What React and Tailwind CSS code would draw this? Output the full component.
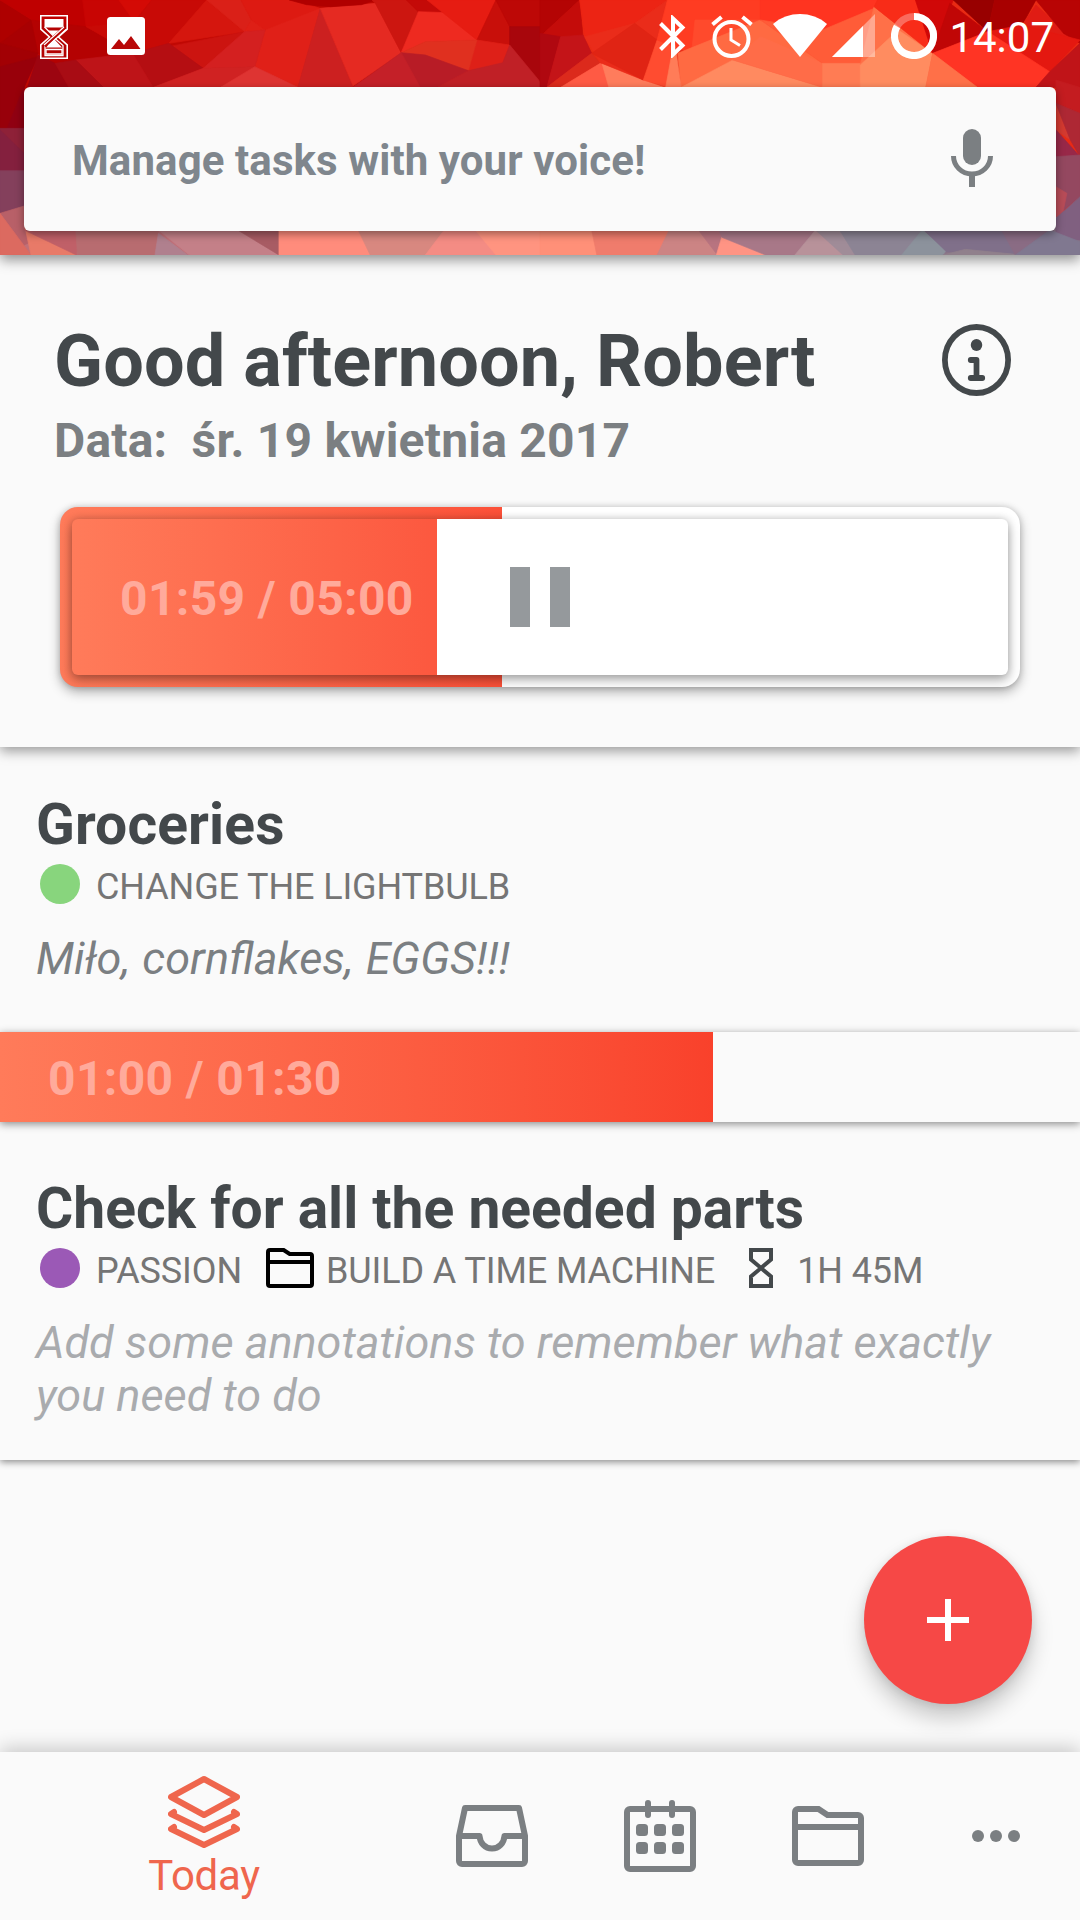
import React from "react";

// low poly artwork behind the search bar, [fill, points]
const polysLeft = [
  ["#ae0000", "0,0 90,60 0,130"],
  ["#bf0000", "0,0 240,0 250,80 110,70"],
  ["#b40202", "90,60 250,80 385,160 160,190 110,160"],
  ["#a80002", "0,130 90,60 110,160"],
  ["#a20004", "0,130 110,160 70,260 0,260"],
  ["#98000a", "0,200 110,170 70,262 20,385 0,385"],
  ["#9c0510", "80,262 110,165 160,190 200,262"],
  ["#900012", "20,385 70,260 70,385"],
  ["#8e2138", "0,385 70,385 70,512 0,512"],
  ["#84203e", "0,390 70,460 70,512 0,512"],
  ["#84405c", "0,512 70,512 70,620 0,640"],
  ["#b86068", "0,640 70,618 140,700 60,740"],
  ["#dc6a60", "0,640 90,765 0,765"],
  ["#c80503", "240,0 345,0 390,65 250,80"],
  ["#d40a05", "345,0 440,0 390,65"],
  ["#c80a06", "440,0 600,0 490,130 385,160 250,80 390,65"],
  ["#d5160e", "490,130 600,0 710,95"],
  ["#cc1410", "490,140 710,95 590,205"],
  ["#b50e12", "490,130 590,205 445,262 385,160"],
  ["#be1418", "385,160 445,262 300,262 220,180"],
  ["#a80c14", "160,190 220,180 300,262 200,262"],
  ["#da2018", "600,0 700,0 730,60 710,95"],
  ["#dd1a12", "700,0 850,0 930,25 770,90 730,60"],
  ["#de1f16", "710,95 730,60 770,90"],
  ["#e02018", "770,90 930,25 865,262 740,200"],
  ["#d42020", "740,200 590,205 710,95 770,90"],
  ["#d02222", "590,205 740,200 640,262 445,262"],
  ["#de3432", "740,200 865,262 640,262"],
  ["#cc2020", "930,25 1025,262 865,262"],
  ["#e52a22", "930,25 1090,10 1165,158 1025,258"],
  ["#b00000", "840,0 1090,0 1050,14 960,20 890,14"],
  ["#cc1610", "1090,10 1080,0 1180,0 1215,35 1165,158"],
  ["#c40a08", "1180,0 1240,0 1345,40 1215,35"],
  ["#ee2a20", "1215,35 1345,40 1385,120 1235,125 1165,158"],
  ["#e61c12", "1240,0 1440,0 1385,120"],
  ["#c80f0a", "1385,120 1440,0 1480,80 1480,135"],
  ["#bd0806", "1440,0 1568,0 1568,80 1480,80"],
  ["#de2018", "1385,120 1480,135 1460,190 1360,212"],
  ["#e0301f", "1165,158 1235,125 1385,120 1360,212"],
  ["#a8060c", "1480,80 1568,80 1568,250 1480,135"],
  ["#b81c26", "1165,158 1235,165 1360,212 1270,262 1215,262"],
  ["#c42028", "1165,158 1220,262 1025,262"],
  ["#c02026", "1270,262 1360,212 1460,188 1480,135 1568,245 1568,262"],
  ["#e87a68", "70,670 220,765 90,765"],
  ["#c06068", "70,690 230,690 222,765"],
  ["#b86c70", "220,690 460,690 450,765 225,765"],
  ["#b0808e", "460,700 545,765 450,765"],
  ["#c48088", "460,690 700,690 810,765 550,765"],
  ["#a85c64", "690,690 810,690 810,765"],
  ["#ff8c7c", "810,690 1050,690 1080,765 810,765"],
  ["#d88880", "1040,690 1290,690 1240,765 1075,765"],
  ["#f48c84", "1290,690 1400,690 1440,765 1235,765"],
  ["#ff9480", "1380,690 1568,690 1568,765 1440,765"],
];

const polysRight = [
  ["#b40404", "0,0 115,0 0,110"],
  ["#c40c0a", "115,0 125,110 0,110"],
  ["#ec2414", "115,0 370,0 275,70 130,110"],
  ["#b00810", "0,100 60,110 20,262 0,262"],
  ["#c41418", "60,110 125,105 150,160 20,262"],
  ["#dc2a1c", "150,160 175,190 60,262 20,262"],
  ["#ff5a44", "175,190 300,240 205,262 60,262"],
  ["#ff7c5c", "180,190 300,240 360,262 200,262"],
  ["#ea2c1a", "275,70 370,0 340,120 300,240 175,188 130,110"],
  ["#e02414", "275,70 340,120 300,240 150,160"],
  ["#ff4c30", "340,120 390,120 370,262 300,240"],
  ["#ff3c22", "340,120 370,0 640,0 640,110 440,160"],
  ["#ff4a2c", "450,60 640,60 640,110 440,160"],
  ["#ff6a42", "640,60 820,190 560,180 410,262 400,160"],
  ["#ff7c58", "390,120 410,262 365,262"],
  ["#ff8a60", "410,262 560,180 820,262"],
  ["#ff6c48", "560,180 640,110 820,190 820,262"],
  ["#ff3420", "640,0 980,0 970,25 820,90 640,60"],
  ["#ff5c38", "640,60 820,90 970,25 940,190 820,190"],
  ["#ff7c54", "820,190 940,190 930,262 820,262"],
  ["#ff7048", "970,20 1140,160 930,195"],
  ["#ff8c60", "930,195 1040,90 1140,160 1120,262 930,262"],
  ["#f82c18", "970,20 980,0 1150,0 1150,150 1140,160"],
  ["#d00808", "1090,0 1200,0 1140,160"],
  ["#c00606", "1190,10 1300,95 1140,160"],
  ["#980000", "1200,0 1320,0 1300,95"],
  ["#a80000", "1320,0 1440,0 1400,75 1300,95"],
  ["#e01c14", "1440,15 1400,75 1480,110 1540,110"],
  ["#b80404", "1440,0 1568,0 1568,130 1520,100"],
  ["#e41810", "1300,95 1400,75 1568,120 1480,215"],
  ["#ff3424", "1140,160 1300,95 1480,215 1450,262 1270,262"],
  ["#ff7048", "1140,160 1270,262 1120,262"],
  ["#c01418", "1480,215 1568,130 1568,262 1440,262"],
  ["#c41c20", "1498,240 1568,262 1568,340 1498,310"],
  ["#d43a30", "1498,310 1540,420 1498,390"],
  ["#ae2834", "1498,310 1568,340 1568,470 1540,420"],
  ["#982848", "1490,380 1568,470 1490,480"],
  ["#944860", "1498,470 1568,465 1568,590 1498,650"],
  ["#b84c58", "1498,560 1530,580 1515,655 1498,650"],
  ["#806080", "1498,655 1568,590 1568,720 1498,720"],
  ["#ff9078", "0,690 160,690 200,765 0,765"],
  ["#f07c6c", "150,690 385,690 340,765 165,765"],
  ["#cc8484", "375,690 530,690 510,765 340,765"],
  ["#b87480", "460,690 530,690 515,765"],
  ["#ff9484", "528,710 660,765 512,765"],
  ["#a87888", "520,690 800,690 740,765 655,765 528,712"],
  ["#b8929a", "800,690 890,765 740,765"],
  ["#a08c98", "800,690 870,690 920,765 880,765"],
  ["#8c8494", "870,690 1120,690 1050,765 915,765"],
  ["#8c929c", "1110,690 1180,750 1170,765 1050,765"],
  ["#80708a", "1115,690 1420,690 1380,765 1180,755"],
  ["#90808c", "1170,765 1235,748 1400,765"],
  ["#8a6c84", "1340,690 1490,690 1380,765"],
  ["#807890", "1480,690 1568,725 1568,765 1380,765"],
];

const Backdrop = () => (
  <svg
    className="absolute inset-0 h-full w-full"
    viewBox="0 0 3136 765"
    preserveAspectRatio="none"
  >
    <rect width="1568" height="765" fill="#c00803" />
    <rect x="1568" width="1568" height="765" fill="#e82a14" />
    <rect y="640" width="1568" height="125" fill="#c07078" />
    <rect x="1568" y="640" width="1568" height="125" fill="#8a7488" />
    {polysLeft.map(([fill, points]) => (
      <polygon key={fill + points} points={points} fill={fill} stroke={fill} strokeWidth="2" />
    ))}
    <g transform="translate(1568 0)">
      {polysRight.map(([fill, points]) => (
        <polygon key={fill + points} points={points} fill={fill} stroke={fill} strokeWidth="2" />
      ))}
    </g>
  </svg>
);

const StatusBar = () => (
  <div className="relative flex h-[87px] items-start pt-[13px] pl-10 pr-[25px] text-white">
    <svg className="mt-[2px] h-11 w-7" viewBox="0 0 28 44" fill="none">
      <path
        d="M.8.8h26.4v13.4L18.5 22l8.7 7.800v13.400H.8V29.800L9.500 22 .8 14.200z"
        stroke="#fff"
        strokeWidth="1.6"
      />
      <path d="M4.500 4h19v8.500h-19z" fill="#fff" />
      <path d="M4.500 12L14 21.500 23.500 12" stroke="#fff" strokeWidth="1.300" />
      <path d="M8 15.500h12L14 21z" fill="#fff" />
      <path d="M14 22.500l9 8V40.500H5V30.500z" stroke="#fff" strokeWidth="1.300" />
      <path d="M14 24l8 8.500H6z" fill="#fff" />
      <path d="M24 13L4.500 31" stroke="#b80504" strokeWidth="3.500" />
      <path d="M24 12L4 30M26 14.500L8 31" stroke="#fff" strokeWidth="1.200" />
      <path d="M6 34.500h16v4.500H6z" stroke="#fff" strokeWidth="1.300" />
    </svg>
    <svg className="mt-1 ml-[39px] h-[38px] w-[38px]" viewBox="0 0 38 38">
      <rect width="38" height="38" rx="3.500" fill="#fff" />
      <path d="M4 32l8-10 5 6 7-9 9.500 13z" fill="#b80808" />
    </svg>
    <div className="ml-auto flex items-start">
      <svg className="mt-[2px] h-[43px] w-[27px]" viewBox="0 0 27 43" fill="none">
        <path
          d="M1.500 8.500L23.500 30.500 14 39.500V3.500L23.500 12.500 1.500 34.500"
          stroke="#fff"
          strokeWidth="4"
        />
      </svg>
      <svg className="mt-[2px] ml-[25px] h-[43px] w-[42px]" viewBox="0 0 42 43" fill="none" stroke="#fff">
        <circle cx="20.500" cy="24" r="17" strokeWidth="4" />
        <path d="M20 13v12l9 5.500" strokeWidth="3" />
        <path d="M1.500 9.500l9-7.500M40.500 9.500l-9-7.500" strokeWidth="4" />
      </svg>
      <svg className="mt-[1px] ml-5 h-[43px] w-[54px]" viewBox="0 0 54 43">
        <path d="M0 10C15-3.300 39-3.300 54 10L27 43z" fill="#fff" />
      </svg>
      <svg className="mt-[1px] ml-[5px] h-[43px] w-[43px]" viewBox="0 0 43 43" fill="#fff">
        <path d="M0 43L43 0v43z" opacity=".4" />
        <path d="M0 43L31 12v31z" />
      </svg>
      <svg className="ml-4 h-[46px] w-[46px]" viewBox="0 0 46 46" fill="none" strokeWidth="7">
        <circle cx="23" cy="23" r="19.500" stroke="#fff" opacity=".3" />
        <path d="M23 3.500A19.500 19.500 0 1 1 6 13.500" stroke="#fff" />
      </svg>
      <span className="ml-3 pt-[1px] pr-[1px] text-[42px] leading-[48px]">14:07</span>
    </div>
  </div>
);

const SearchBar = () => (
  <div className="relative mx-6 flex h-36 items-center justify-between rounded-md bg-[#fafafa] pr-[63px] pl-12 shadow-[0_3px_8px_rgba(0,0,0,0.4)]">
    <span className="pt-1 text-[42px] leading-[50px] font-bold tracking-[0.09px] text-[#7f868d]">
      Manage tasks with your voice!
    </span>
    <svg className="mb-[2px] h-[58px] w-[42px]" viewBox="0 0 42 58" fill="none">
      <rect x="12" width="18" height="36" rx="9" fill="#7b7f82" />
      <path d="M2.500 27a18.500 18 0 0 0 37 0" stroke="#7b7f82" strokeWidth="5" />
      <path d="M21 46v12" stroke="#7b7f82" strokeWidth="6" />
    </svg>
  </div>
);

const InfoIcon = () => (
  <svg className="h-[72px] w-[69px]" viewBox="0 0 72 72" preserveAspectRatio="none">
    <circle cx="36" cy="36" r="33" fill="none" stroke="#43484b" strokeWidth="6" />
    <circle cx="36" cy="21" r="6" fill="#43484b" />
    <path
      d="M30 36h6v18M30 54h12"
      fill="none"
      stroke="#43484b"
      strokeWidth="6"
      strokeLinecap="round"
      strokeLinejoin="round"
    />
  </svg>
);

const FolderIcon = ({ className }) => (
  <svg className={className} viewBox="0 0 72 60" fill="none" stroke="currentColor" preserveAspectRatio="none">
    <path
      d="M6 3H26.500L35.500 9H66a3 3 0 0 1 3 3V54a3 3 0 0 1-3 3H6a3 3 0 0 1-3-3V6a3 3 0 0 1 3-3zM3 21H69"
      strokeWidth="6"
    />
  </svg>
);

const HourglassIcon = () => (
  <svg className="h-10 w-6" viewBox="0 0 24 40" fill="none">
    <path
      d="M2 2H22V11.500L12 20 2 11.500zM12 20L22 28.500V38H2V28.500z"
      stroke="#43484b"
      strokeWidth="4"
    />
  </svg>
);

const Greeting = () => (
  <section className="relative z-10 h-[492px] bg-[#fafafa] pt-[65px] shadow-[0_4px_12px_rgba(0,0,0,0.4)]">
    <div className="flex items-start justify-between pr-[69px] pl-[54px]">
      <h1 className="text-[72px] leading-[84px] font-bold tracking-[0.11px] text-[#43484b]">
        Good afternoon, Robert
      </h1>
      <div className="pt-1">
        <InfoIcon />
      </div>
    </div>
    <p className="mt-[9px] pl-[54px] text-[48px] leading-[56px] font-bold tracking-[0.2px] whitespace-pre text-[#7b7f82]">
      {"Data:  śr. 19 kwietnia 2017"}
    </p>
    <div className="mx-[60px] mt-[38px] h-[180px] rounded-[18px] bg-white bg-linear-to-r from-[#ff7b5a] to-[#fb5038] to-[442px] bg-[length:442px_100%] bg-no-repeat p-3 shadow-[0_5px_12px_rgba(0,0,0,0.3),0_0_6px_rgba(0,0,0,0.16)]">
      <div className="relative flex h-full items-center rounded-md bg-white bg-linear-to-r from-[#ff7b5a] to-[#fc583f] to-[365px] bg-[length:365px_100%] bg-no-repeat pl-12 shadow-[0_5px_12px_rgba(0,0,0,0.3),0_0_8px_rgba(0,0,0,0.18)]">
        <span className="pt-1 text-[48px] leading-[56px] font-bold tracking-[0.36px] text-[#ffaa9b]">
          01:59 / 05:00
        </span>
        <div className="absolute inset-0 flex items-center justify-center gap-5">
          <span className="h-[60px] w-5 bg-[#95999c]" />
          <span className="h-[60px] w-5 bg-[#95999c]" />
        </div>
      </div>
    </div>
  </section>
);

const Meta = ({ children }) => (
  <div className="mt-[6px] flex h-10 items-center pl-10 text-[36px] leading-[40px] tracking-[-0.11px] text-[#757575]">
    {children}
  </div>
);

const Tasks = () => (
  <main className="grow">
    <article className="pt-[45px]">
      <h2 className="pl-9 text-[57px] leading-[66px] font-bold tracking-[0.12px] text-[#43484b]">
        Groceries
      </h2>
      <Meta>
        <span className="h-10 w-10 rounded-full bg-[#88d57d]" />
        <span className="ml-4 pt-[5px]">CHANGE THE LIGHTBULB</span>
      </Meta>
      <p className="mt-7 px-9 text-[45px] leading-[53px] text-[#7b7f82] italic [font-variant-ligatures:common-ligatures] [word-spacing:1.3px]">
        Miło, cornflakes, EGGS!!!
      </p>
      <div className="relative mt-[47px] flex h-[90px] items-center bg-[#fafafa] bg-linear-to-r from-[#ff7b5a] to-[#f9412b] to-[713px] bg-[length:713px_100%] bg-no-repeat pl-12 shadow-[0_2px_8px_rgba(0,0,0,0.45)]">
        <span className="pt-[3px] text-[48px] leading-[56px] font-bold tracking-[0.36px] text-[#ffaa9b]">
          01:00 / 01:30
        </span>
      </div>
    </article>
    <article className="pt-[54px] pb-[38px] shadow-[0_2px_7px_rgba(0,0,0,0.45)]">
      <h2 className="pl-9 text-[57px] leading-[66px] font-bold tracking-[-0.03px] text-[#43484b]">
        Check for all the needed parts
      </h2>
      <Meta>
        <span className="h-10 w-10 rounded-full bg-[#9b59b6]" />
        <span className="ml-4 pt-[5px]">PASSION</span>
        <FolderIcon className="ml-6 h-10 w-12 text-black" />
        <span className="ml-3 pt-[5px]">BUILD A TIME MACHINE</span>
        <div className="ml-[34px]">
          <HourglassIcon />
        </div>
        <span className="ml-6 pt-[5px]">1H 45M</span>
      </Meta>
      <p className="mt-7 px-9 text-[45px] leading-[53px] text-[#a9abae] italic">
        Add some annotations to remember what exactly you need to do
      </p>
    </article>
  </main>
);

const BottomNav = () => (
  <nav className="relative z-10 flex h-[168px] bg-[#fafafa] text-[#7b7f82] shadow-[0_-4px_18px_rgba(0,0,0,0.2)]">
    <div className="flex w-[408px] flex-col items-center pt-6 text-[#ef664d]">
      <svg
        className="h-[72px] w-[72px]"
        viewBox="0 0 72 72"
        fill="none"
        stroke="currentColor"
        strokeWidth="6"
        strokeLinecap="round"
        strokeLinejoin="round"
      >
        <path d="M36 3L69 21 36 39 3 21z" />
        <path d="M6 36L3 38 36 54 69 38 66 36M6 51L3 53 36 69 69 53 66 51" />
      </svg>
      <span className="mt-1 text-[42px] leading-[48px] tracking-[-0.3px]">Today</span>
    </div>
    <div className="flex w-[168px] items-center justify-center">
      <svg className="h-[62px] w-[72px]" viewBox="0 0 72 62" fill="none" stroke="currentColor" strokeWidth="6" strokeLinejoin="round">
        <path d="M9 3H63L69 31V56a3 3 0 0 1-3 3H6a3 3 0 0 1-3-3V31z" />
        <path d="M3 31H23.500C24 38 29 43.500 36 43.500S48 38 48.500 31H69" />
      </svg>
    </div>
    <div className="flex w-[168px] items-center justify-center">
      <svg className="h-[72px] w-[72px]" viewBox="0 0 72 72" fill="currentColor">
        <rect x="3" y="9" width="66" height="60" rx="3" fill="none" stroke="currentColor" strokeWidth="6" />
        <rect x="21" width="6" height="18" rx="3" />
        <rect x="45" width="6" height="18" rx="3" />
        {[24, 42].map((y) =>
          [12, 30, 48].map((x) => (
            <rect key={`${x}-${y}`} x={x} y={y} width="12" height="12" rx="3.500" />
          ))
        )}
      </svg>
    </div>
    <div className="flex w-[168px] items-center justify-center">
      <FolderIcon className="h-[60px] w-[72px]" />
    </div>
    <div className="flex w-[168px] items-center justify-center gap-[6px]">
      <span className="h-3 w-3 rounded-full bg-[#7b7f82]" />
      <span className="h-3 w-3 rounded-full bg-[#7b7f82]" />
      <span className="h-3 w-3 rounded-full bg-[#7b7f82]" />
    </div>
  </nav>
);

const App = () => {
  return (
    <div className="relative flex h-[1920px] w-[1080px] flex-col overflow-hidden bg-[#fafafa] font-[Roboto,sans-serif] antialiased">
      <header className="relative z-20 h-[255px] shadow-[0_5px_12px_rgba(0,0,0,0.42)]">
        <Backdrop />
        <StatusBar />
        <SearchBar />
      </header>
      <Greeting />
      <Tasks />
      <BottomNav />
      <button className="absolute right-12 bottom-[216px] flex h-[168px] w-[168px] items-center justify-center rounded-full bg-[#f64846] shadow-[0_14px_22px_rgba(0,0,0,0.2),0_2px_10px_rgba(0,0,0,0.1)]">
        <svg className="h-[42px] w-[42px]" viewBox="0 0 42 42" stroke="#fff" strokeWidth="6">
          <path d="M21 0V42M0 21H42" />
        </svg>
      </button>
    </div>
  );
};

export default App;
